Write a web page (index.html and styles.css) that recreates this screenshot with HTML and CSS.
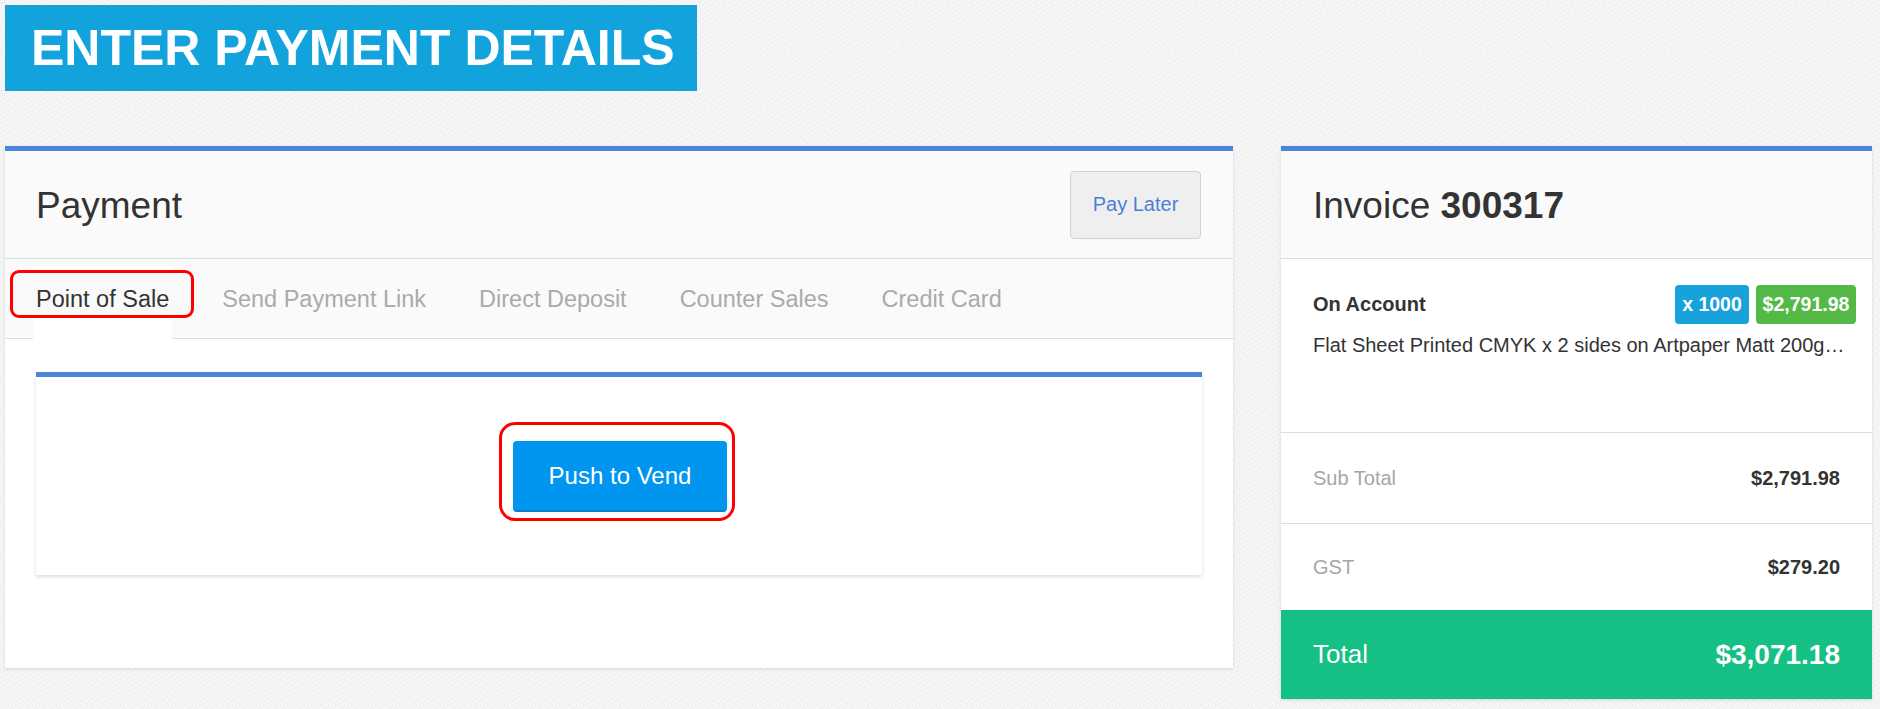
FILE: index.html
```html
<!DOCTYPE html>
<html lang="en">
<head>
<meta charset="utf-8">
<title>Enter Payment Details</title>
<link rel="stylesheet" href="styles.css">
</head>
<body>
<div class="page">
  <div class="banner"><h1 class="banner-title">ENTER PAYMENT DETAILS</h1></div>

  <div class="columns">
    <section class="panel payment">
      <header class="panel-head">
        <h2 class="panel-title">Payment</h2>
        <button class="btn-later" type="button">Pay Later</button>
      </header>
      <nav class="tabs">
        <a class="tab active"><span class="mark-tab"></span><span class="tab-label">Point of Sale</span></a>
        <a class="tab"><span class="tab-label">Send Payment Link</span></a>
        <a class="tab"><span class="tab-label">Direct Deposit</span></a>
        <a class="tab"><span class="tab-label">Counter Sales</span></a>
        <a class="tab"><span class="tab-label">Credit Card</span></a>
      </nav>
      <div class="panel-body">
        <div class="card">
          <span class="mark-btn"><button class="btn-vend" type="button">Push to Vend</button></span>
        </div>
      </div>
    </section>

    <aside class="panel invoice">
      <header class="panel-head">
        <h2 class="panel-title">Invoice <strong>300317</strong></h2>
      </header>
      <div class="line-item">
        <div class="item-top">
          <span class="item-name">On Account</span>
          <span class="badges"><span class="badge badge-qty">x 1000</span><span class="badge badge-price">$2,791.98</span></span>
        </div>
        <div class="item-desc">Flat Sheet Printed CMYK x 2 sides on Artpaper Matt 200g…</div>
      </div>
      <div class="sum-row sub"><span class="sum-label">Sub Total</span><span class="sum-value">$2,791.98</span></div>
      <div class="sum-row gst"><span class="sum-label">GST</span><span class="sum-value">$279.20</span></div>
      <div class="total-row"><span class="total-label">Total</span><span class="total-value">$3,071.18</span></div>
    </aside>
  </div>
</div>
</body>
</html>
```

FILE: styles.css
```css
* { box-sizing: border-box; }

html, body {
  margin: 0;
  padding: 0;
}

body {
  font-family: "Liberation Sans", Arial, sans-serif;
  color: #333;
  background-color: #f4f4f4;
  background-image:
    repeating-linear-gradient(62deg, rgba(0,0,0,0.025) 0 1px, transparent 1px 3px),
    repeating-linear-gradient(-30deg, rgba(255,255,255,0.5) 0 1px, transparent 1px 4px);
  height: 709px;
  overflow: hidden;
}

.page {
  padding: 5px;
}

.banner {
  width: 692px;
  height: 86px;
  background: #12a3dc;
  padding-left: 26px;
  display: flex;
  align-items: center;
}

.banner-title {
  margin: 0;
  color: #fff;
  font-size: 50px;
  font-weight: bold;
  line-height: 1;
}

.columns {
  display: flex;
  align-items: flex-start;
  gap: 48px;
  margin-top: 55px;
}

.panel {
  background: #fff;
  border-top: 5px solid #4a86d8;
  box-shadow: 0 1px 3px rgba(0,0,0,0.12);
}

.payment { width: 1228px; }
.invoice { width: 591px; }

.panel-head {
  height: 108px;
  background: #fafafa;
  border-bottom: 1px solid #dedede;
  display: flex;
  align-items: center;
  justify-content: space-between;
  padding: 0 32px 0 31px;
}

.invoice .panel-head { padding-left: 32px; }

.panel-title {
  margin: 0;
  font-size: 37px;
  font-weight: normal;
  color: #333;
  line-height: 1;
  padding-top: 2px;
}

.panel-title strong { font-weight: bold; }

.btn-later {
  width: 131px;
  height: 68px;
  background: #efefef;
  border: 1px solid #d2d2d2;
  border-radius: 4px;
  color: #4a7fd6;
  font-family: "Liberation Sans", Arial, sans-serif;
  font-size: 20px;
  padding: 0;
}

.tabs {
  height: 80px;
  background: #fafafa;
  border-bottom: 1px solid #dedede;
  display: flex;
  align-items: flex-end;
  padding-left: 28px;
}

.tab {
  position: relative;
  height: 73px;
  padding: 20px 3px 0;
  margin-right: 47px;
  margin-bottom: -1px;
  font-size: 23.5px;
  line-height: 26px;
  color: #aaa;
  white-space: nowrap;
}

.tab.active {
  background: #fff;
  color: #333;
}

.tab-label {
  position: relative;
  z-index: 1;
}

.mark-tab {
  position: absolute;
  left: -23px;
  top: 4px;
  width: 184px;
  height: 48px;
  border: 3px solid #f00;
  border-radius: 9px;
  background: #f9f9f9;
  z-index: 0;
}

.panel-body {
  height: 329px;
  padding: 33px 31px 0 31px;
}

.card {
  height: 203px;
  border-top: 5px solid #4a86d8;
  background: #fff;
  box-shadow: 0 2px 4px rgba(0,0,0,0.14);
  display: flex;
  justify-content: center;
  align-items: flex-start;
  padding-top: 45px;
}

.mark-btn {
  display: inline-block;
  border: 3px solid #f00;
  border-radius: 16px;
  padding: 16px 5px 6px 11px;
  margin-right: 4px;
}

.btn-vend {
  display: block;
  width: 214px;
  height: 71px;
  background: #0095ef;
  border: none;
  border-bottom: 2px solid #0a7fc9;
  border-radius: 4px;
  color: #fff;
  font-family: "Liberation Sans", Arial, sans-serif;
  font-size: 24px;
  padding: 0;
}

.line-item {
  height: 174px;
  border-bottom: 1px solid #dedede;
  padding: 26px 16px 0 32px;
}

.item-top {
  display: flex;
  align-items: center;
  justify-content: space-between;
}

.item-name {
  font-size: 20px;
  font-weight: bold;
  color: #333;
}

.badges {
  display: flex;
  gap: 7px;
}

.badge {
  display: inline-block;
  height: 39px;
  line-height: 39px;
  border-radius: 4px;
  color: #fff;
  font-size: 19.5px;
  font-weight: bold;
  text-align: center;
}

.badge-qty { background: #17a2dc; width: 74px; }
.badge-price { background: #55b948; width: 100px; }

.item-desc {
  margin-top: 10px;
  font-size: 20px;
  line-height: 23px;
  color: #333;
  white-space: nowrap;
}

.sum-row {
  display: flex;
  align-items: center;
  justify-content: space-between;
  padding: 0 32px;
}

.sum-row.sub {
  height: 91px;
  border-bottom: 1px solid #dedede;
}

.sum-row.gst {
  height: 86px;
}

.sum-label {
  font-size: 20px;
  color: #a6a6a6;
}

.sum-value {
  font-size: 20px;
  font-weight: bold;
  color: #333;
}

.total-row {
  height: 89px;
  background: #14c083;
  color: #fff;
  display: flex;
  align-items: center;
  justify-content: space-between;
  padding: 0 32px;
}

.total-label { font-size: 26px; }

.total-value {
  font-size: 28px;
  font-weight: bold;
}
```
